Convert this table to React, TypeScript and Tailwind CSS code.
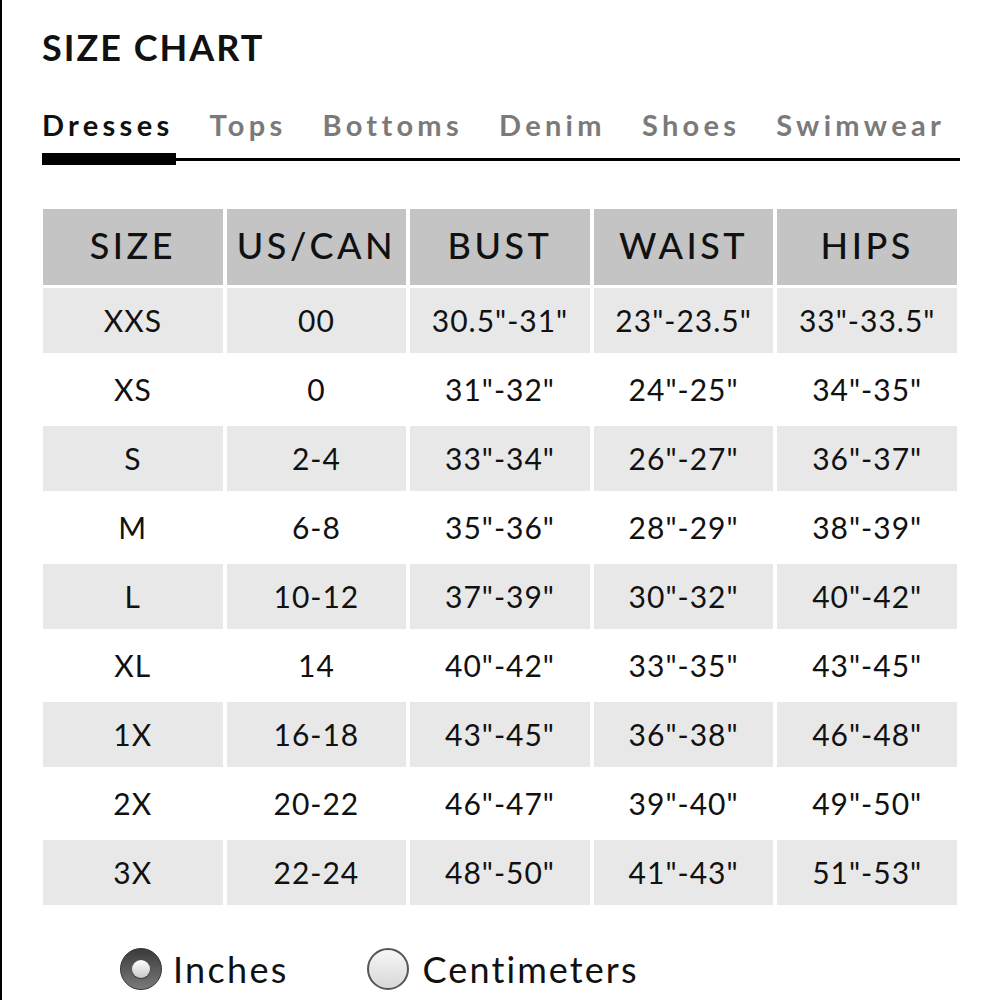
import React from "react";

const tabs = ["Dresses", "Tops", "Bottoms", "Denim", "Shoes", "Swimwear"];
const headers = ["SIZE", "US/CAN", "BUST", "WAIST", "HIPS"];
const rows = [
  ["XXS", "00", '30.5"-31"', '23"-23.5"', '33"-33.5"'],
  ["XS", "0", '31"-32"', '24"-25"', '34"-35"'],
  ["S", "2-4", '33"-34"', '26"-27"', '36"-37"'],
  ["M", "6-8", '35"-36"', '28"-29"', '38"-39"'],
  ["L", "10-12", '37"-39"', '30"-32"', '40"-42"'],
  ["XL", "14", '40"-42"', '33"-35"', '43"-45"'],
  ["1X", "16-18", '43"-45"', '36"-38"', '46"-48"'],
  ["2X", "20-22", '46"-47"', '39"-40"', '49"-50"'],
  ["3X", "22-24", '48"-50"', '41"-43"', '51"-53"'],
];

export default function App() {
  return (
    <div
      className="w-[1000px] h-[1000px] bg-white border-l-2 border-black overflow-hidden text-[#111]"
      style={{ fontFamily: "Lato, 'Noto Sans', sans-serif" }}
    >
      <div className="pl-[40px] pt-[26px]">
        <h1 className="text-[36px] leading-[42px] font-bold tracking-[2px] text-[#111]">SIZE CHART</h1>

        <div className="mt-[40px] w-[918px]">
          <div className="flex gap-[36px] items-end">
            {tabs.map((t, i) => (
              <div
                key={t}
                className={`text-[29px] leading-[34px] font-bold tracking-[4.3px] ${i === 0 ? "text-[#111]" : "text-[#7a7a7a]"}`}
              >
                {t}
              </div>
            ))}
          </div>
          <div className="relative mt-[11px] h-[13px]">
            <div className="absolute left-0 right-0 top-[5px] h-[3px] bg-black" />
            <div className="absolute left-0 top-0 w-[134px] h-[12px] bg-black" />
          </div>
        </div>

        <div className="mt-[43px] ml-[1px] w-[914px] grid grid-cols-5 gap-x-[4px] gap-y-[4px]">
          {headers.map((h) => (
            <div
              key={h}
              className="h-[76px] pb-[4px] bg-[#c4c4c4] flex items-center justify-center text-[36px] tracking-[3.5px] font-medium text-[#111]"
            >
              {h}
            </div>
          ))}
          {rows.map((r, ri) =>
            r.map((c, ci) => (
              <div
                key={`${ri}-${ci}`}
                className={`h-[65px] flex items-center justify-center text-[30px] tracking-[1px] text-[#111] ${
                  ri % 2 === 0 ? "bg-[#e8e8e8]" : "bg-white"
                } ${ri === 0 ? "-mt-[1px]" : ""}`}
              >
                {c}
              </div>
            ))
          )}
        </div>

        <div className="mt-[43px] flex items-center">
          <div className="ml-[78px] w-[42px] h-[42px] rounded-full bg-[linear-gradient(180deg,#3a3a3a,#7a7a7a)] border border-[#333] flex items-center justify-center">
            <div className="w-[18px] h-[18px] rounded-full bg-[linear-gradient(180deg,#ffffff,#c8c8c8)] shadow-[0_1px_1px_rgba(0,0,0,0.5)]" />
          </div>
          <span className="ml-[11px] text-[36px] leading-[40px] tracking-[2.3px] text-[#111]">Inches</span>
          <div className="ml-[78px] w-[42px] h-[42px] rounded-full bg-[linear-gradient(180deg,#f6f6f6,#d8d8d8)] border-2 border-[#555]" />
          <span className="ml-[14px] text-[36px] leading-[40px] tracking-[2.1px] text-[#111]">Centimeters</span>
        </div>
      </div>
    </div>
  );
}
